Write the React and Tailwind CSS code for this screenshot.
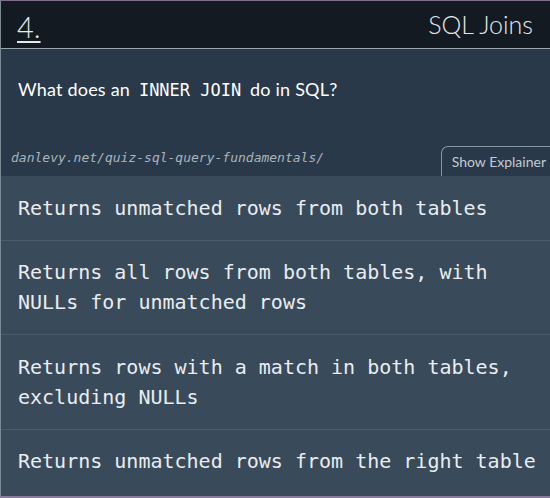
const options = [
  "Returns unmatched rows from both tables",
  "Returns all rows from both tables, with NULLs for unmatched rows",
  "Returns rows with a match in both tables, excluding NULLs",
  "Returns unmatched rows from the right table",
];

const mono = { fontFamily: '"DejaVu Sans Mono", monospace' };

export default function App() {
  return (
    <div className="w-[550px] h-[498px] overflow-hidden flex flex-col border-t border-b-2 border-t-[#7d6f8c] border-b-[#8a7a9c] border-l border-l-[#7c8a94] bg-[#394a5a] font-['Lato',sans-serif]">
      <header className="h-[48px] shrink-0 flex items-center justify-between pl-[16px] pr-[17px] bg-[#131a21] border-b border-[#9aa6ac]">
        <span className="text-[29px] leading-none font-light text-[#e6e8ea] underline underline-offset-[3px] decoration-[2px] pt-[4px]">
          4.
        </span>
        <span className="text-[25px] font-light text-[#e4e7ea]">
          SQL Joins
        </span>
      </header>

      <section className="h-[127px] shrink-0 bg-[#29394a] flex flex-col justify-between">
        <p className="pt-[27px] pl-[17px] text-[18px] tracking-[0.2px] text-white">
          What does an{" "}
          <code style={mono} className="text-[17px] tracking-normal px-[4px]">INNER JOIN</code>{" "}
          do in SQL?
        </p>
        <div className="flex items-end justify-between">
          <span
            style={mono}
            className="italic text-[13px] text-[#a9b4bc] pl-[10px] pb-[9px]"
          >
            danlevy.net/quiz-sql-query-fundamentals/
          </span>
          <span className="h-[30px] flex items-center pl-[10px] pr-[4px] border-t border-l border-[#8696a3] rounded-tl-[7px] text-[14px] text-[#c3cbd1]">
            Show Explainer
          </span>
        </div>
      </section>

      <ul className="flex flex-col">
        {options.map((opt, i) => (
          <li
            key={i}
            style={mono}
            className={
              "pl-[17px] pr-[14px] pt-[16.5px] pb-[17px] text-[20px] leading-[30px] text-[#e9edf0] " +
              (i > 0 ? "border-t border-[#4b5b69]" : "")
            }
          >
            {opt}
          </li>
        ))}
      </ul>
    </div>
  );
}
